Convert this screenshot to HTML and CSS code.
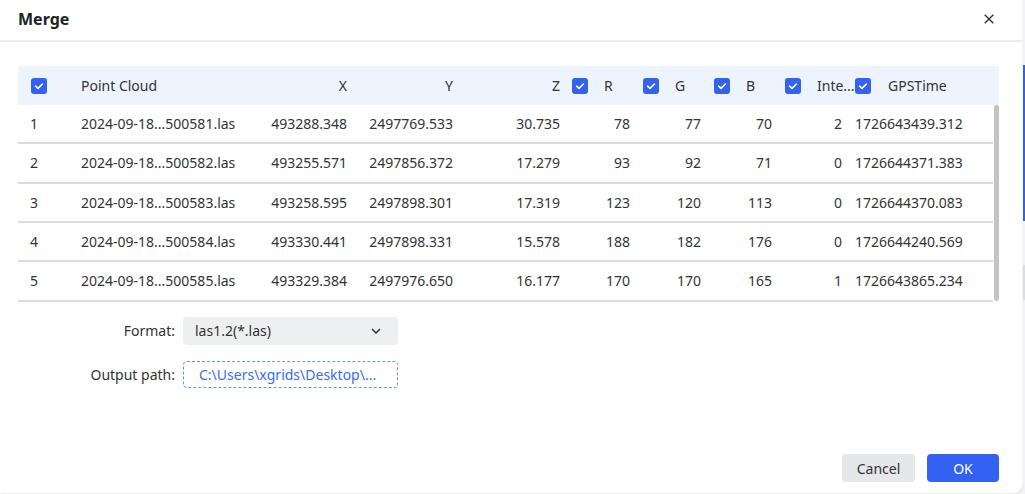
FILE: index.html
```html
<!DOCTYPE html>
<html lang="en">
<head>
<meta charset="utf-8">
<title>Merge</title>
<link rel="stylesheet" href="styles.css">
</head>
<body>
<div class="screen">
  <div class="dialog">
    <div class="dlg-head">
      <span class="dlg-title">Merge</span>
      <svg class="close" width="10" height="10" viewBox="0 0 10 10"><path d="M0.7 0.7 L9.3 9.3 M9.3 0.7 L0.7 9.3" stroke="#333" stroke-width="1.4" fill="none"/></svg>
    </div>
    <div class="dlg-body">
      <div class="table">
        <div class="thead">
          <div class="cell c0"><svg class="cb" width="16" height="16" viewBox="0 0 16 16"><rect width="16" height="16" rx="3" fill="#3461f0"/><path d="M4.6 8.2 L7 10.4 L11.4 6" stroke="#fff" stroke-width="1.6" fill="none" stroke-linecap="round" stroke-linejoin="round"/></svg></div>
          <div class="cell c1">Point Cloud</div>
          <div class="cell num">X</div>
          <div class="cell num">Y</div>
          <div class="cell num">Z</div>
          <div class="cell chk"><svg class="cb" width="16" height="16" viewBox="0 0 16 16"><rect width="16" height="16" rx="3" fill="#3461f0"/><path d="M4.6 8.2 L7 10.4 L11.4 6" stroke="#fff" stroke-width="1.6" fill="none" stroke-linecap="round" stroke-linejoin="round"/></svg><span>R</span></div>
          <div class="cell chk"><svg class="cb" width="16" height="16" viewBox="0 0 16 16"><rect width="16" height="16" rx="3" fill="#3461f0"/><path d="M4.6 8.2 L7 10.4 L11.4 6" stroke="#fff" stroke-width="1.6" fill="none" stroke-linecap="round" stroke-linejoin="round"/></svg><span>G</span></div>
          <div class="cell chk"><svg class="cb" width="16" height="16" viewBox="0 0 16 16"><rect width="16" height="16" rx="3" fill="#3461f0"/><path d="M4.6 8.2 L7 10.4 L11.4 6" stroke="#fff" stroke-width="1.6" fill="none" stroke-linecap="round" stroke-linejoin="round"/></svg><span>B</span></div>
          <div class="cell chk"><svg class="cb" width="16" height="16" viewBox="0 0 16 16"><rect width="16" height="16" rx="3" fill="#3461f0"/><path d="M4.6 8.2 L7 10.4 L11.4 6" stroke="#fff" stroke-width="1.6" fill="none" stroke-linecap="round" stroke-linejoin="round"/></svg><span>Inte...</span></div>
          <div class="cell chk last"><svg class="cb" width="16" height="16" viewBox="0 0 16 16"><rect width="16" height="16" rx="3" fill="#3461f0"/><path d="M4.6 8.2 L7 10.4 L11.4 6" stroke="#fff" stroke-width="1.6" fill="none" stroke-linecap="round" stroke-linejoin="round"/></svg><span>GPSTime</span></div>
        </div>
        <div class="tbody-wrap">
          <div class="tbody">
            <div class="row">
              <div class="cell c0">1</div><div class="cell c1">2024-09-18...500581.las</div>
              <div class="cell num">493288.348</div><div class="cell num">2497769.533</div><div class="cell num">30.735</div>
              <div class="cell num n2">78</div><div class="cell num n2">77</div><div class="cell num n2">70</div><div class="cell num n2">2</div>
              <div class="cell time">1726643439.312</div>
            </div>
            <div class="row">
              <div class="cell c0">2</div><div class="cell c1">2024-09-18...500582.las</div>
              <div class="cell num">493255.571</div><div class="cell num">2497856.372</div><div class="cell num">17.279</div>
              <div class="cell num n2">93</div><div class="cell num n2">92</div><div class="cell num n2">71</div><div class="cell num n2">0</div>
              <div class="cell time">1726644371.383</div>
            </div>
            <div class="row">
              <div class="cell c0">3</div><div class="cell c1">2024-09-18...500583.las</div>
              <div class="cell num">493258.595</div><div class="cell num">2497898.301</div><div class="cell num">17.319</div>
              <div class="cell num n2">123</div><div class="cell num n2">120</div><div class="cell num n2">113</div><div class="cell num n2">0</div>
              <div class="cell time">1726644370.083</div>
            </div>
            <div class="row">
              <div class="cell c0">4</div><div class="cell c1">2024-09-18...500584.las</div>
              <div class="cell num">493330.441</div><div class="cell num">2497898.331</div><div class="cell num">15.578</div>
              <div class="cell num n2">188</div><div class="cell num n2">182</div><div class="cell num n2">176</div><div class="cell num n2">0</div>
              <div class="cell time">1726644240.569</div>
            </div>
            <div class="row">
              <div class="cell c0">5</div><div class="cell c1">2024-09-18...500585.las</div>
              <div class="cell num">493329.384</div><div class="cell num">2497976.650</div><div class="cell num">16.177</div>
              <div class="cell num n2">170</div><div class="cell num n2">170</div><div class="cell num n2">165</div><div class="cell num n2">1</div>
              <div class="cell time">1726643865.234</div>
            </div>
          </div>
          <div class="scrollbar"><div class="thumb"></div></div>
        </div>
      </div>
      <div class="form">
        <label class="flabel">Format:</label>
        <div class="select"><span>las1.2(*.las)</span><svg width="10" height="6" viewBox="0 0 10 6"><path d="M1 1 L5 5 L9 1" stroke="#333" stroke-width="1.5" fill="none"/></svg></div>
        <label class="flabel">Output path:</label>
        <div class="path">C:\Users\xgrids\Desktop\...</div>
      </div>
    </div>
    <div class="dlg-foot">
      <button class="btn btn-cancel">Cancel</button>
      <button class="btn btn-ok">OK</button>
    </div>
  </div>
  <div class="backdrop"><div class="bd-blue"></div><div class="bd-gray"></div></div>
</div>
</body>
</html>
```

FILE: styles.css
```css
* { box-sizing: border-box; }
html, body { margin: 0; padding: 0; }
body {
  font-family: "Noto Sans", "Open Sans", sans-serif;
  font-size: 14px;
  color: #333;
  background: #f1f2f4;
}
.screen {
  display: flex;
  width: 1025px;
  height: 494px;
  overflow: hidden;
}
.dialog {
  width: 1022px;
  height: 493px;
  background: #fff;
  border-radius: 0 0 8px 0;
  box-shadow: 1px 0 2px rgba(0,0,0,0.12);
  display: flex;
  flex-direction: column;
  flex: none;
}
.dlg-head {
  height: 42px;
  border-bottom: 2px solid #ececec;
  display: flex;
  align-items: center;
  justify-content: space-between;
  padding: 0 28px 2px 18px;
}
.dlg-title {
  font-weight: 700;
  font-size: 16px;
  color: #222;
  line-height: 20px;
}
.close { display: block; }
.dlg-body {
  padding: 24px 23px 0 18px;
}
.table { width: 981px; }
.thead, .row {
  display: grid;
  grid-template-columns: 51px 184px 106px 106px 107px 71px 71px 71px 70px 1fr;
}
.thead {
  height: 39px;
  background: #eef4fe;
}
.cell {
  display: flex;
  align-items: center;
  white-space: nowrap;
  overflow: hidden;
  color: #333;
}
.c0 { padding-left: 12px; }
.thead .c0 { padding-left: 13px; }
.c1 { padding-left: 12px; }
.num { justify-content: flex-end; padding-right: 12px; }
.n2 { padding-right: 13px; }
.chk { gap: 16px; overflow: visible; }
.chk.last { gap: 17px; }
.cb { display: block; flex: none; }
.tbody-wrap { display: flex; }
.tbody { width: 975px; }
.row {
  height: 39.33px;
  border-bottom: 2px solid #dcdcdc;
}
.time { padding-left: 0; }
.scrollbar {
  width: 6px;
}
.thumb {
  width: 5px;
  margin-left: 1px;
  height: 196px;
  background: #c4c4c4;
  border-radius: 2px;
}
.form {
  display: grid;
  grid-template-columns: 157px 215px;
  column-gap: 8px;
  row-gap: 16px;
  margin-top: 15px;
  align-items: center;
}
.flabel { text-align: right; color: #333; }
.select {
  height: 28px;
  background: #eeeff1;
  border-radius: 4px;
  display: flex;
  align-items: center;
  justify-content: space-between;
  padding: 0 17px 0 12px;
  color: #333;
}
.select svg { display: block; }
.path {
  height: 27px;
  border: 1.5px dashed #6e8ff2;
  border-radius: 4px;
  display: flex;
  align-items: center;
  padding-left: 15px;
  color: #3b6cf2;
  white-space: nowrap;
}
.dlg-foot {
  margin-top: auto;
  display: flex;
  justify-content: flex-end;
  gap: 12px;
  padding: 0 23px 11px 0;
}
.btn {
  font-family: "Noto Sans", "Open Sans", sans-serif;
  font-size: 14px;
  height: 28px;
  border: none;
  border-radius: 4px;
  padding: 0;
  cursor: pointer;
}
.btn-cancel { width: 73px; background: #e6e7e9; color: #333; }
.btn-ok { width: 72px; background: #3461f1; color: #fff; }
.backdrop {
  flex: 1;
  display: flex;
  flex-direction: column;
  padding-top: 65px;
  background: #f3f3f5;
}
.bd-blue {
  height: 156px;
  margin-left: 1px;
  background: #3a62d6;
}
.bd-gray {
  height: 35px;
  margin-top: 44px;
  margin-left: 1px;
  background: #dcdde0;
}
```
